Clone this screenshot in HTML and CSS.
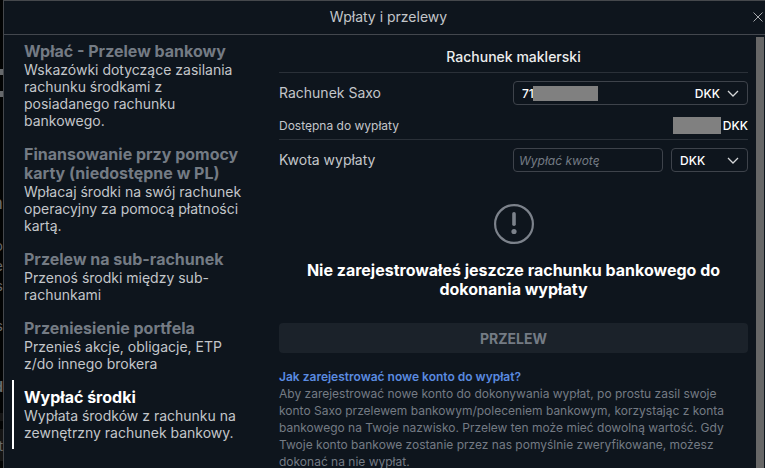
FILE: index.html
```
<!DOCTYPE html>
<html lang="pl">
<head>
    <meta charset="UTF-8">
    <meta name="viewport" content="width=device-width, initial-scale=1.0">
    <title>Wpłaty i przelewy</title>
    <link rel="stylesheet" href="styles.css">
</head>
<body>
    <!-- page behind the dialog -->
    <div class="backdrop" aria-hidden="true">
        <span class="bit bit-logo"></span>
        <span class="bit bit-panel"></span>
        <span class="bit bit-h">h</span>
        <span class="bit bit-o">o</span>
        <span class="bit bit-e">e</span>
        <span class="bit bit-s">s</span>
        <span class="bit bit-s2">s</span>
        <span class="bit bit-d">d</span>
        <span class="bit bit-t">t</span>
    </div>

    <div class="dialog">
        <header class="dialog-header">
            <h1>Wpłaty i przelewy</h1>
            <button class="close" type="button" aria-label="Zamknij">
                <svg width="10" height="10" viewBox="0 0 10 10"><path d="M0.5 0.5L9.5 9.5M9.5 0.5L0.5 9.5"/></svg>
            </button>
        </header>

        <div class="dialog-body">
            <nav class="menu">
                <a class="menu-item" href="#">
                    <strong>Wpłać - Przelew bankowy</strong>
                    <span>Wskazówki dotyczące zasilania rachunku środkami z posiadanego rachunku bankowego.</span>
                </a>
                <a class="menu-item" href="#">
                    <strong>Finansowanie przy pomocy karty (niedostępne w PL)</strong>
                    <span>Wpłacaj środki na swój rachunek operacyjny za pomocą płatności kartą.</span>
                </a>
                <a class="menu-item" href="#">
                    <strong>Przelew na sub-rachunek</strong>
                    <span>Przenoś środki między sub-rachunkami</span>
                </a>
                <a class="menu-item" href="#">
                    <strong>Przeniesienie portfela</strong>
                    <span>Przenieś akcje, obligacje, ETP z/do innego brokera</span>
                </a>
                <a class="menu-item active" href="#">
                    <strong>Wypłać środki</strong>
                    <span>Wypłata środków z rachunku na zewnętrzny rachunek bankowy.</span>
                </a>
            </nav>

            <main class="content">
                <h2>Rachunek maklerski</h2>

                <div class="row">
                    <label for="account">Rachunek Saxo</label>
                    <div class="field account">
                        <select id="account">
                            <option>71</option>
                        </select>
                        <span class="mask mask-account"></span>
                        <span class="unit">DKK</span>
                        <svg class="chevron" width="12" height="7" viewBox="0 0 12 7"><path d="M1 1L6 6L11 1"/></svg>
                    </div>
                </div>

                <div class="row available">
                    <span>Dostępna do wypłaty</span>
                    <span class="amount"><span class="mask"></span>DKK</span>
                </div>

                <div class="row">
                    <label for="amount">Kwota wypłaty</label>
                    <div class="inputs">
                        <input class="field" id="amount" type="text" placeholder="Wypłać kwotę">
                        <div class="field currency">
                            <select aria-label="Waluta">
                                <option>DKK</option>
                            </select>
                            <svg class="chevron" width="12" height="7" viewBox="0 0 12 7"><path d="M1 1L6 6L11 1"/></svg>
                        </div>
                    </div>
                </div>

                <div class="notice">
                    <svg width="40" height="40" viewBox="0 0 40 40">
                        <circle cx="20" cy="20" r="18.9" fill="none" stroke="#7c828b" stroke-width="2.2"/>
                        <rect x="18.2" y="8" width="3.6" height="14" rx="1.8" fill="#7c828b"/>
                        <circle cx="20" cy="27.5" r="2.6" fill="#7c828b"/>
                    </svg>
                    <p>Nie zarejestrowałeś jeszcze rachunku bankowego do dokonania wypłaty</p>
                </div>

                <button class="submit" type="button" disabled>PRZELEW</button>

                <div class="help">
                    <a href="#">Jak zarejestrować nowe konto do wypłat?</a>
                    <p>Aby zarejestrować nowe konto do dokonywania wypłat, po prostu zasil swoje konto Saxo przelewem bankowym/poleceniem bankowym, korzystając z konta bankowego na Twoje nazwisko. Przelew ten może mieć dowolną wartość. Gdy Twoje konto bankowe zostanie przez nas pomyślnie zweryfikowane, możesz dokonać na nie wypłat.</p>
                </div>
            </main>

            <div class="scrollbar"></div>
        </div>
    </div>
</body>
</html>
```

FILE: styles.css
```
* {
    box-sizing: border-box;
}

body {
    margin: 0;
    height: 100vh;
    overflow: hidden;
    padding-left: 3px;
    background-color: #020303;
    color: #c3c6ca;
    font-family: Inter, "Liberation Sans", sans-serif;
    font-size: 14px;
    line-height: 17px;
}

h1, h2, p {
    margin: 0;
}

a {
    text-decoration: none;
}

button, input, select {
    font: inherit;
    color: inherit;
}

/* Page behind the dialog */
.backdrop {
    position: absolute;
    top: 0;
    left: 0;
    width: 3px;
    height: 100%;
    overflow: hidden;
    color: #66696c;
}

.bit {
    position: absolute;
    right: 0;
}

.bit-logo {
    top: 69px;
    width: 3px;
    height: 28px;
    border: solid #66696c;
    border-width: 6px 0;
}

.bit-panel {
    top: 413px;
    width: 3px;
    height: 48px;
    border-top: 8px solid #141414;
    border-bottom: 32px solid #141414;
}

.bit-h { top: 194px; font-size: 18px; }
.bit-o { top: 237px; }
.bit-e { top: 257px; }
.bit-s { top: 277px; }
.bit-s2 { top: 317px; }
.bit-d { top: 378px; font-weight: 700; }
.bit-t { top: 437px; }

/* Dialog */
.dialog {
    position: relative;
    display: flex;
    flex-direction: column;
    height: 100%;
    border: 1px solid #45484c;
    border-width: 1px 0 0 1px;
    background-color: #0e151d;
}

.dialog-header {
    display: grid;
    grid-template-columns: 1fr auto 1fr;
    align-items: center;
    flex: none;
    height: 34px;
    padding: 0 0 2px 8px;
    border-bottom: 1px solid #43474e;
}

.dialog-header h1 {
    grid-column: 2;
    font-size: 14px;
    font-weight: 400;
}

.close {
    display: flex;
    justify-self: end;
    padding: 2px;
    border: none;
    background: none;
    cursor: pointer;
}

.close path {
    stroke: #a5a8ac;
    fill: none;
}

.dialog-body {
    display: flex;
    flex: 1;
    min-height: 0;
    overflow: hidden;
}

/* Menu */
.menu {
    flex: none;
    width: 243px;
    margin-top: -1px;
    padding-left: 8px;
}

.menu-item {
    display: block;
    padding: 8px 0 8px 10px;
    border-left: 2px solid transparent;
    color: #c3c6ca;
}

.menu-item strong {
    display: block;
    color: #747b84;
    font-size: 16px;
    line-height: 19px;
}

.menu-item span {
    display: block;
}

.menu-item.active {
    border-color: #fff;
}

.menu-item.active strong {
    color: #fff;
}

/* Form */
.content {
    flex: 1;
    min-width: 0;
    margin: 0 8px 0 32px;
}

.content h2 {
    padding: 13px 0 7px;
    border-bottom: 1px solid #2a3038;
    color: #eceded;
    font-size: 14px;
    font-weight: 500;
    text-align: center;
}

.row {
    display: flex;
    justify-content: space-between;
    align-items: center;
    height: 40px;
}

.row label {
    padding-bottom: 2px;
}

.row.available {
    height: 27px;
    padding-bottom: 1px;
    border-bottom: 1px solid #2a3038;
    font-size: 12px;
}

.field {
    position: relative;
    display: flex;
    align-items: center;
    height: 24px;
    border: 1px solid #3e434b;
    border-radius: 4px;
    background-color: transparent;
    color: #fff;
    font-size: 12px;
    font-weight: 500;
}

.field select {
    width: 100%;
    height: 100%;
    padding: 0 8px;
    border: none;
    outline: none;
    background: none;
    appearance: none;
    cursor: pointer;
}

.account,
.inputs {
    width: 235px;
}

.inputs {
    display: flex;
    gap: 8px;
}

.inputs input {
    flex: 1;
    min-width: 0;
    padding: 0 5px;
    font-weight: 400;
}

.inputs input::placeholder {
    color: #747b84;
    font-style: italic;
}

.currency {
    width: 77px;
}

.chevron {
    position: absolute;
    right: 8px;
    pointer-events: none;
}

.chevron path {
    fill: none;
    stroke: #d5d7d9;
    stroke-width: 1.3;
}

.unit {
    position: absolute;
    right: 27px;
    pointer-events: none;
}

.mask {
    width: 48px;
    height: 17px;
    background-color: #808080;
}

.mask-account {
    position: absolute;
    left: 19px;
    width: 65px;
    height: 15px;
}

.amount {
    display: flex;
    gap: 2px;
    color: #fff;
    font-weight: 500;
}

/* Notice */
.notice {
    display: flex;
    flex-direction: column;
    align-items: center;
    gap: 17px;
    padding: 24px;
    color: #fff;
    font-size: 16px;
    font-weight: 700;
    line-height: 19px;
    text-align: center;
}

.submit {
    display: block;
    width: 100%;
    height: 30px;
    border: none;
    border-radius: 4px;
    background-color: #1b222a;
    color: #747b84;
    font-weight: 700;
}

.help {
    padding-top: 15px;
    color: #747b84;
    font-size: 12px;
}

.help a {
    color: #5a8be0;
    font-weight: 600;
}

/* Scrollbar thumb */
.scrollbar {
    flex: none;
    width: 8px;
    margin: 2px 1px 0 0;
    background-color: #676767;
}
```
